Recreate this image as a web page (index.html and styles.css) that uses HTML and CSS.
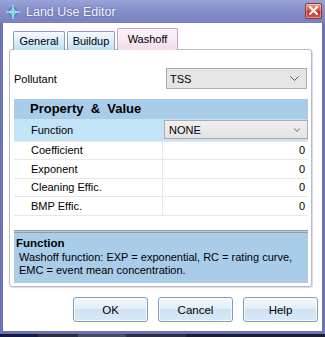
FILE: index.html
```html
<!DOCTYPE html>
<html>
<head>
<meta charset="utf-8">
<link rel="stylesheet" href="styles.css">
</head>
<body>
<div class="window">
  <div class="titlebar">
    <svg class="app-icon" width="14" height="14" viewBox="0 0 14 14">
      <path d="M7 0.5 L13.5 7 L7 13.5 L0.5 7 Z" fill="#3f86c8"/>
      <path d="M7 2.5 L11.5 7 L7 11.5 L2.5 7 Z" fill="#7cc7f0"/>
      <path d="M4 7 L7 4 L10 7 L7 10 Z" fill="#4aa84a"/>
      <path d="M7 0 L7 14 M0 7 L14 7" stroke="#e8f4ff" stroke-width="1"/>
    </svg>
    <span class="title">Land Use Editor</span>
    <div class="close">
      <svg width="9" height="9" viewBox="0 0 9 9"><path d="M1 1 L8 8 M8 1 L1 8" stroke="#fff" stroke-width="2.2" stroke-linecap="square"/></svg>
    </div>
  </div>
  <div class="client">
    <div class="tabs">
      <div class="tab">General</div>
      <div class="tab">Buildup</div>
      <div class="tab active">Washoff</div>
    </div>
    <div class="panel">
      <div class="pollutant-row">
        <span class="pl-label">Pollutant</span>
        <div class="combo">
          <span>TSS</span>
          <svg class="chev" width="9" height="5" viewBox="0 0 9 5"><path d="M0.5 0.5 L4.5 4.5 L8.5 0.5" fill="none" stroke="#555" stroke-width="1"/></svg>
        </div>
      </div>
      <div class="grid">
        <div class="grid-header">Property&nbsp; &amp;&nbsp; Value</div>
        <div class="row selected">
          <div class="name">Function</div>
          <div class="val">
            <div class="combo small">
              <span>NONE</span>
              <svg class="chev" width="6" height="4" viewBox="0 0 6 4"><path d="M0.5 0.5 L3 3.5 L5.5 0.5" fill="none" stroke="#666" stroke-width="1"/></svg>
            </div>
          </div>
        </div>
        <div class="row"><div class="name">Coefficient</div><div class="val num">0</div></div>
        <div class="row"><div class="name">Exponent</div><div class="val num">0</div></div>
        <div class="row"><div class="name">Cleaning Effic.</div><div class="val num">0</div></div>
        <div class="row"><div class="name">BMP Effic.</div><div class="val num">0</div></div>
      </div>
      <div class="spacer"></div>
      <div class="help">
        <div class="help-title">Function</div>
        <div class="help-text">Washoff function: EXP = exponential, RC = rating curve,<br>EMC = event mean concentration.</div>
      </div>
    </div>
    <div class="buttons">
      <div class="btn">OK</div>
      <div class="btn">Cancel</div>
      <div class="btn">Help</div>
    </div>
  </div>
  <div class="taskbar">
    <div class="tb a"></div><div class="tb b"></div><div class="tb c"></div><div class="tb d"></div>
  </div>
</div>
</body>
</html>
```
FILE: styles.css
```css
html, body {
  margin: 0;
  padding: 0;
  width: 325px;
  height: 337px;
  overflow: hidden;
  background: #6a73b6;
}
.window {
  width: 325px;
  height: 337px;
  display: flex;
  flex-direction: column;
  font-family: "Liberation Sans", Arial, sans-serif;
  font-size: 11px;
  color: #000;
}
.titlebar {
  height: 23px;
  flex: none;
  display: flex;
  align-items: center;
  background: linear-gradient(#9aa3d6, #8891cb 40%, #7880c0);
  padding: 0 3px 0 6px;
}
.app-icon {
  flex: none;
  margin-right: 6px;
}
.title {
  font-size: 12.5px;
  color: #f4f5fb;
  text-shadow: 0 0 2px #4a5296;
  flex: 1;
  padding-top: 1px;
}
.close {
  width: 17px;
  height: 16px;
  box-sizing: border-box;
  border: 1px solid #8c3a3a;
  border-radius: 2px;
  background: linear-gradient(#f2a090, #e0503e 45%, #c8301e 55%, #d85a40);
  display: flex;
  align-items: center;
  justify-content: center;
  margin-top: -2px;
  box-shadow: inset 0 0 0 1px rgba(255,255,255,0.35);
}
.client {
  height: 308px;
  flex: none;
  margin: 0 3px;
  background: #fff;
  display: flex;
  flex-direction: column;
  padding-top: 6px;
  box-sizing: border-box;
}
.tabs {
  display: flex;
  align-items: flex-end;
  gap: 2px;
  padding-left: 10px;
  height: 21px;
  position: relative;
  z-index: 2;
  margin-bottom: -1px;
}
.tab {
  height: 19px;
  box-sizing: border-box;
  border: 1px solid #8b9cbc;
  border-bottom: none;
  border-radius: 2px 2px 0 0;
  background: linear-gradient(#f5fafe, #d9eefb 50%, #bfe0f6);
  padding: 3px 0 0;
  text-align: center;
  font-size: 11px;
}
.tab:nth-child(1) { width: 52px; }
.tab:nth-child(2) { width: 48px; }
.tab.active {
  width: 61px;
  height: 22px;
  border-color: #c8a2c8;
  background: linear-gradient(#fbf4f9, #f6e9f3 50%, #efdcea);
  padding-top: 4px;
}
.panel {
  margin-left: 6px;
  width: 303px;
  height: 238px;
  box-sizing: border-box;
  border: 1px solid #b9b9cc;
  border-radius: 3px;
  box-shadow: 1px 1px 1px #d8d8e4;
  background: #fff;
  padding: 18px 3px 3px 4px;
  display: flex;
  flex-direction: column;
  position: relative;
  z-index: 1;
}
.pollutant-row {
  display: flex;
  align-items: center;
  height: 21px;
}
.pl-label {
  width: 152px;
  flex: none;
}
.combo {
  flex: 1;
  margin-right: 1px;
  height: 21px;
  box-sizing: border-box;
  border: 1px solid #acacac;
  background: #e5e5e5;
  display: flex;
  align-items: center;
  justify-content: space-between;
  padding: 0 7px 0 3px;
}
.combo.small {
  height: 19px;
  margin-right: 0;
  padding: 0 7px 0 4px;
  background: linear-gradient(#f0f0f0, #e3e3e3);
}
.grid {
  margin-top: 10px;
  display: flex;
  flex-direction: column;
}
.grid-header {
  height: 20px;
  background: #a9cde9;
  font-weight: bold;
  font-size: 13px;
  padding-left: 16px;
  line-height: 20px;
}
.row {
  display: flex;
  height: 18.5px;
  box-sizing: border-box;
  border-bottom: 1px solid #e8e8e8;
  align-items: center;
}
.row.selected {
  height: 22.5px;
  background: #c3e3f6;
  border-bottom: 1px solid #e8e8e8;
  align-items: center;
}
.name {
  width: 149px;
  flex: none;
  padding-left: 17px;
  box-sizing: border-box;
  align-self: stretch;
  display: flex;
  align-items: center;
  border-right: 1px solid #e6e6e6;
}
.row.selected .name { border-right: none; width: 150px; }
.val {
  flex: 1;
  align-self: stretch;
  display: flex;
  align-items: center;
}
.val.num {
  justify-content: flex-end;
  padding-right: 3px;
}
.spacer {
  flex: 1;
}
.help {
  height: 53px;
  box-sizing: border-box;
  border-top: 3px double #9a9a9a;
  background: #a9cde9;
  padding: 4px 0 0 2px;
}
.help-title {
  font-weight: bold;
  font-size: 11.5px;
  line-height: 13px;
}
.help-text {
  padding-left: 3px;
  line-height: 13px;
  margin-top: 1px;
}
.buttons {
  display: flex;
  justify-content: flex-end;
  gap: 10px;
  padding-right: 4px;
  margin-top: 10px;
}
.btn {
  width: 75px;
  height: 25px;
  box-sizing: border-box;
  border: 1px solid #7d9ebf;
  border-radius: 3px;
  background: linear-gradient(#f3f8fc, #e4eef7 45%, #cfe2f2 50%, #d9e9f6);
  box-shadow: inset 0 0 0 1px rgba(255,255,255,0.7);
  display: flex;
  align-items: center;
  justify-content: center;
  font-size: 11.5px;
}
.taskbar {
  margin-top: 3px;
  height: 3px;
  display: flex;
  background: #1b1d2e;
}
.tb.a { width: 38px; background: #131a3a; }
.tb.b { width: 40px; background: #2a2c3a; }
.tb.c { width: 48px; background: #474a5c; }
.tb.d { width: 60px; background: #2c2e3c; }
```
